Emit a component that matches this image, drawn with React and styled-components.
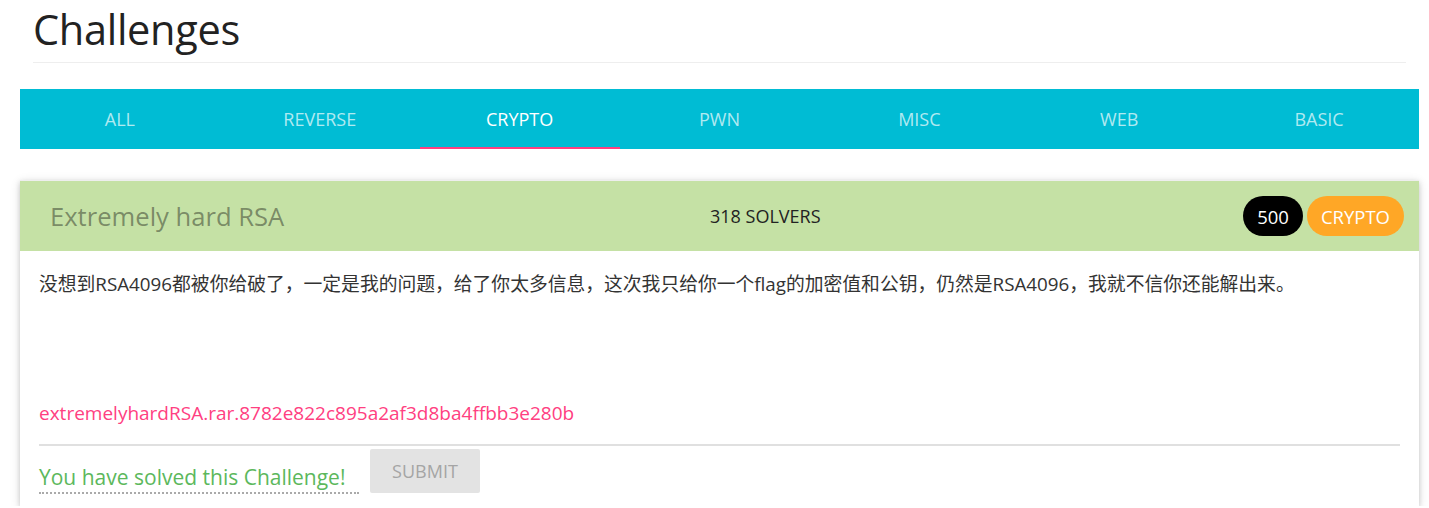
import React from "react";
import styled, { createGlobalStyle } from "styled-components";

const GlobalStyle = createGlobalStyle`
  body {
    margin: 0;
    background: #fff;
    font-family: "Open Sans", "Noto Sans CJK SC", sans-serif;
    color: #333;
  }
`;

const tabs = ["ALL", "REVERSE", "CRYPTO", "PWN", "MISC", "WEB", "BASIC"];

const App = () => {
  return (
    <Page>
      <GlobalStyle />
      <PageHeader>
        <Title>Challenges</Title>
      </PageHeader>
      <TabBar>
        {tabs.map((t) => (
          <Tab key={t} active={t === "CRYPTO"}>
            {t}
          </Tab>
        ))}
      </TabBar>
      <Card>
        <CardHead>
          <ChalName>Extremely hard RSA</ChalName>
          <Solvers>318 SOLVERS</Solvers>
          <Badges>
            <Badge color="#000">500</Badge>
            <Badge color="#ffa726">CRYPTO</Badge>
          </Badges>
        </CardHead>
        <CardBody>
          <Desc>
            没想到RSA4096都被你给破了，一定是我的问题，给了你太多信息，这次我只给你一个flag的加密值和公钥，仍然是RSA4096，我就不信你还能解出来。
          </Desc>
          <FileLink href="#">extremelyhardRSA.rar.8782e822c895a2af3d8ba4ffbb3e280b</FileLink>
          <Divider />
          <SubmitRow>
            <Solved>You have solved this Challenge!</Solved>
            <SubmitButton disabled>SUBMIT</SubmitButton>
          </SubmitRow>
        </CardBody>
      </Card>
    </Page>
  );
};

export default App;

const Page = styled.div`
  padding: 0 10px 0 20px;
`;

const PageHeader = styled.div`
  margin: 0 13px;
  padding-top: 3px;
  border-bottom: 1px solid #eee;
  height: 59px;
`;

const Title = styled.h1`
  margin: 0;
  font-size: 41.5px;
  font-weight: 400;
  line-height: 52px;
  color: #222;
  letter-spacing: -0.3px;
`;

const TabBar = styled.div`
  display: grid;
  grid-template-columns: repeat(7, 1fr);
  margin-top: 26px;
  height: 60px;
  background: #00bcd4;
`;

const Tab = styled.div`
  display: flex;
  align-items: center;
  justify-content: center;
  font-size: 18px;
  color: ${({ active }) => (active ? "#fff" : "rgba(255,255,255,0.7)")};
  border-bottom: 2px solid ${({ active }) => (active ? "#ff4081" : "transparent")};
  padding-top: 2px;
`;

const Card = styled.div`
  margin-top: 31px;
  background: #fff;
  border-top: 1px solid #eee;
  box-shadow: 0 2px 5px rgba(0, 0, 0, 0.16), 0 2px 10px rgba(0, 0, 0, 0.12);
`;

const CardHead = styled.div`
  display: grid;
  grid-template-columns: 660px 1fr auto;
  align-items: center;
  height: 70px;
  padding: 0 15px 0 30px;
  background: #c5e1a5;
`;

const ChalName = styled.div`
  font-size: 25.6px;
  color: rgba(0, 0, 0, 0.4);
`;

const Solvers = styled.div`
  font-size: 18px;
  color: #222;
`;

const Badges = styled.div`
  display: flex;
  gap: 4px;
`;

const Badge = styled.span`
  display: inline-flex;
  align-items: center;
  height: 40px;
  padding: 0 14px;
  border-radius: 20px;
  background: ${({ color }) => color};
  color: #fff;
  font-size: 18.5px;
`;

const CardBody = styled.div`
  padding: 19px 19px 12px;
`;

const Desc = styled.p`
  margin: 0;
  font-size: 18.8px;
  line-height: 28px;
  color: #333;
  min-height: 131px;
`;

const FileLink = styled.a`
  display: block;
  font-size: 19px;
  line-height: 24px;
  color: #ff4081;
  text-decoration: none;
`;

const Divider = styled.div`
  margin-top: 19px;
  border-top: 2px solid #e0e0e0;
`;

const SubmitRow = styled.div`
  display: flex;
  align-items: flex-start;
  gap: 11px;
  margin-top: 3px;
`;

const Solved = styled.div`
  width: 320px;
  padding-top: 13px;
  font-size: 21px;
  line-height: 30px;
  color: #5cb85c;
  border-bottom: 2px dotted #aaa;
`;

const SubmitButton = styled.button`
  width: 110px;
  height: 44px;
  border: none;
  border-radius: 2px;
  background: #e3e3e3;
  color: #a5a5a5;
  font-family: inherit;
  font-size: 18px;
`;
